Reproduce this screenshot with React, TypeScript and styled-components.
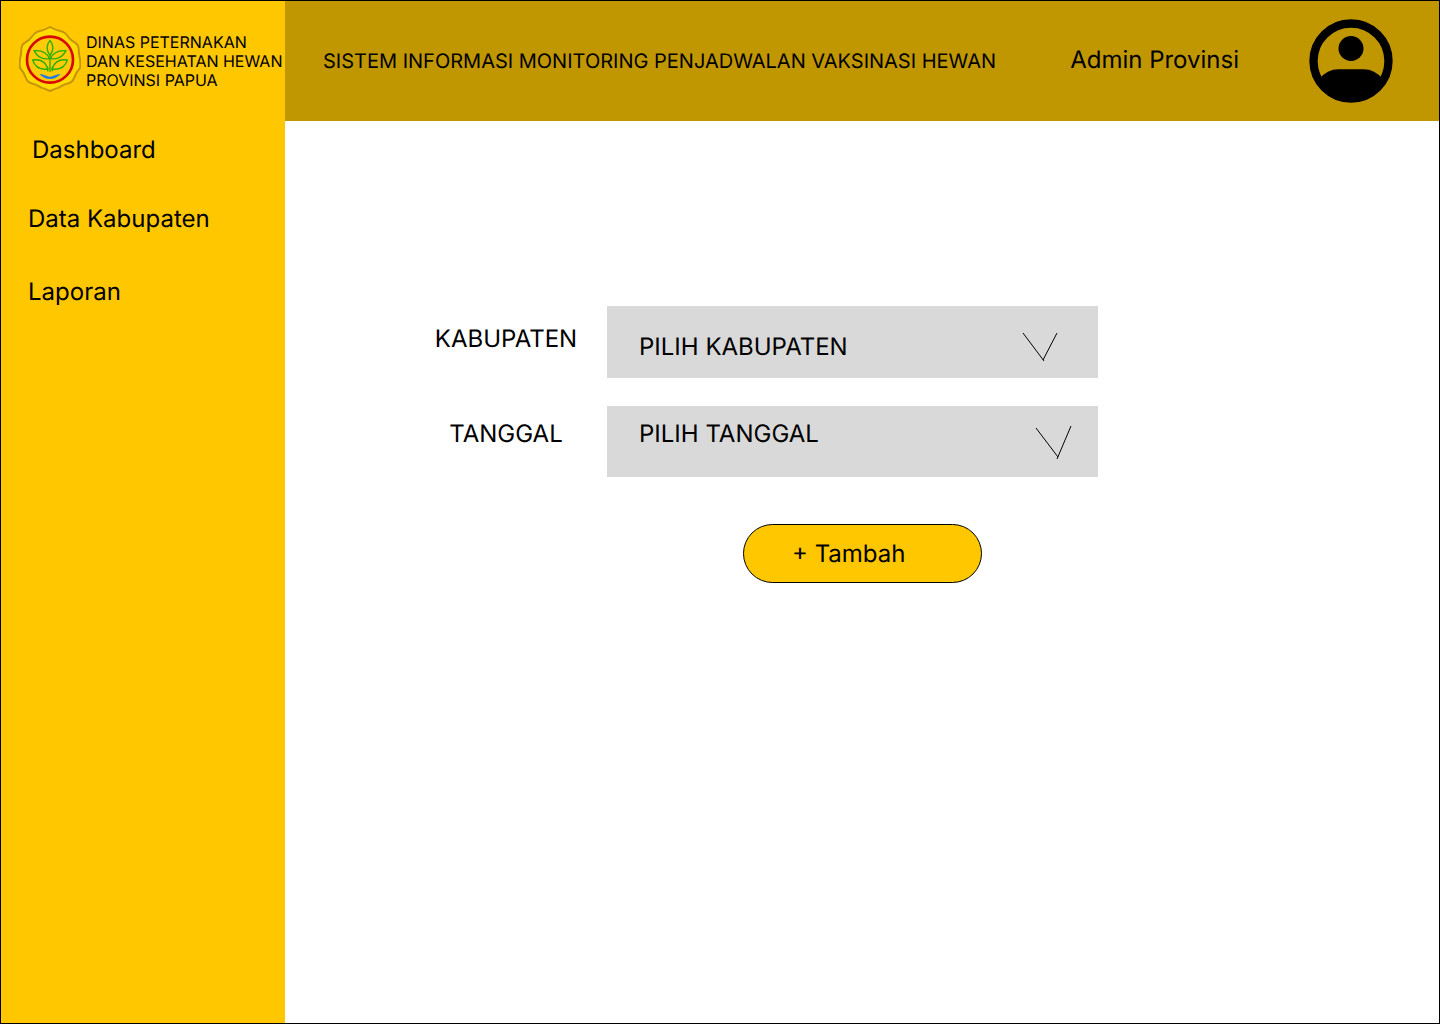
import React from "react";
import styled, { createGlobalStyle } from "styled-components";

const GlobalStyle = createGlobalStyle`
  *, *::before, *::after { box-sizing: border-box; }
  body {
    margin: 0;
    background: #ffffff;
    color: #000000;
    font-family: Inter, "Liberation Sans", sans-serif;
    font-size: 24px;
    font-weight: 400;
    line-height: 29px;
    text-rendering: geometricPrecision;
  }
`;

const Page = styled.div`
  display: grid;
  grid-template-columns: 284px minmax(0, 1fr);
  min-height: 100vh;
  border: 1px solid #000000;
`;

const Sidebar = styled.aside`
  background: #ffc700;
`;

const Brand = styled.div`
  display: flex;
  align-items: center;
  gap: 5px;
  height: 120px;
  padding: 0 0 4px 18px;
`;

const BrandName = styled.p`
  margin: 0;
  padding-top: 4px;
  font-size: 16px;
  line-height: 19px;
  white-space: nowrap;
`;

const Nav = styled.nav`
  display: flex;
  flex-direction: column;
  gap: 40px;
  padding: 14px 27px;
`;

const NavGroup = styled.div<{ $inset?: number }>`
  display: flex;
  flex-direction: column;
  align-items: flex-start;
  gap: 44px;
  padding-left: ${({ $inset = 0 }) => $inset}px;
`;

const NavLink = styled.a`
  color: inherit;
  text-decoration: none;
`;

const Content = styled.div`
  display: flex;
  flex-direction: column;
`;

const Header = styled.header`
  display: flex;
  align-items: center;
  height: 120px;
  padding: 0 38px;
  background: #c09700;
`;

const Title = styled.h1`
  flex: 1;
  margin: 0;
  font-size: 20px;
  font-weight: 400;
  line-height: 24px;
`;

const Account = styled.div`
  display: flex;
  align-items: center;
  gap: 62px;
`;

const AccountName = styled.span`
  padding-bottom: 4px;
  white-space: nowrap;
`;

const Avatar = styled.svg`
  display: block;
  width: 100px;
  height: 100px;
`;

const Form = styled.form`
  display: grid;
  grid-template-columns: 144px minmax(0, 491px);
  column-gap: 29px;
  row-gap: 28px;
  padding: 185px 149px 40px;
`;

const Label = styled.label<{ $top: number }>`
  padding-top: ${({ $top }) => $top}px;
  text-align: center;
`;

const SelectBox = styled.div`
  display: grid;
  background: #d9d9d9;

  > * {
    grid-area: 1 / 1;
  }
`;

const Select = styled.select<{ $top: number; $bottom: number }>`
  appearance: none;
  width: 100%;
  margin: 0;
  padding: ${({ $top, $bottom }) => `${$top}px 80px ${$bottom}px 32px`};
  border: 0;
  border-radius: 0;
  background: transparent;
  color: inherit;
  font: inherit;
  text-rendering: inherit;
`;

const Chevron = styled.svg`
  justify-self: end;
  width: 80px;
  height: 70px;
  pointer-events: none;
`;

const Actions = styled.div`
  grid-column: 2;
  padding: 19px 0 0 136px;
`;

const AddButton = styled.button`
  width: 239px;
  padding: 14px 48px;
  border: 1px solid #000000;
  border-radius: 30px;
  background: #ffc700;
  color: inherit;
  font: inherit;
  text-align: left;
  text-rendering: inherit;
  white-space: nowrap;
`;

const Emblem = () => (
  <svg width="62" height="66" viewBox="57 48 186 198" fill="none" aria-hidden="true">
    <path
      d="M150 51 Q168 61 188 65 Q198 70 205 81 Q212 91 225 98 Q235 104 236 116 Q236 130 240 148 Q242 162 240 174 Q229 186 223 202 Q219 216 208 219 Q190 223 176 233 Q160 238 150 243 Q140 238 124 233 Q110 223 92 219 Q81 216 77 202 Q71 186 60 174 Q58 162 60 148 Q64 130 64 116 Q65 104 75 98 Q88 91 95 81 Q102 70 112 65 Q132 61 150 51Z"
      fill="#ffda00"
      stroke="#c6940c"
      strokeWidth="6"
    />
    <circle cx="150" cy="149" r="69" fill="#ffca08" stroke="#d60808" strokeWidth="8" />
    <g stroke="#22b000" strokeWidth="4" strokeLinejoin="round">
      <path d="M150 91 Q133 112 150 137 Q167 112 150 91Z" />
      <path d="M148 146 Q138 119 102 122 Q117 151 148 146Z" />
      <path d="M152 146 Q162 119 198 122 Q183 151 152 146Z" />
      <path d="M144 177 Q134 145 98 150 Q108 182 144 177Z" />
      <path d="M156 177 Q166 145 202 150 Q192 182 156 177Z" />
      <path d="M150 137V186M143 170V184M157 170V184" />
    </g>
    <path d="M118 191 Q132 194 141 198 Q150 202 159 198 Q168 194 182 191 Q170 206 150 207 Q130 206 118 191Z" fill="#1f7ae8" />
  </svg>
);

const fields = [
  {
    id: "kabupaten",
    label: "KABUPATEN",
    placeholder: "PILIH KABUPATEN",
    labelTop: 18,
    top: 26,
    bottom: 17,
    chevron: "M5 27L26 55M25 54L39 27",
  },
  {
    id: "tanggal",
    label: "TANGGAL",
    placeholder: "PILIH TANGGAL",
    labelTop: 13,
    top: 13,
    bottom: 29,
    chevron: "M18 22L40 51M39 53L53 20",
  },
];

export default function App() {
  return (
    <>
      <GlobalStyle />
      <Page>
        <Sidebar>
          <Brand>
            <Emblem />
            <BrandName>
              DINAS PETERNAKAN
              <br />
              DAN KESEHATAN HEWAN
              <br />
              PROVINSI PAPUA
            </BrandName>
          </Brand>
          <Nav>
            <NavGroup $inset={4}>
              <NavLink href="#dashboard">Dashboard</NavLink>
            </NavGroup>
            <NavGroup>
              <NavLink href="#data-kabupaten">Data Kabupaten</NavLink>
              <NavLink href="#laporan">Laporan</NavLink>
            </NavGroup>
          </Nav>
        </Sidebar>
        <Content>
          <Header>
            <Title>SISTEM INFORMASI MONITORING PENJADWALAN VAKSINASI HEWAN</Title>
            <Account>
              <AccountName>Admin Provinsi</AccountName>
              <Avatar viewBox="0 0 24 24" aria-hidden="true">
                <circle cx="12" cy="12" r="9" fill="none" stroke="#000" strokeWidth="2" />
                <circle cx="12" cy="9" r="3" />
                <path d="M4.5 16.3Q6.2 14 9 14H15Q17.8 14 19.5 16.3L18.5 19L12 21.5L5.5 19Z" />
              </Avatar>
            </Account>
          </Header>
          <main>
            <Form onSubmit={(event) => event.preventDefault()}>
              {fields.map((field) => (
                <React.Fragment key={field.id}>
                  <Label htmlFor={field.id} $top={field.labelTop}>
                    {field.label}
                  </Label>
                  <SelectBox>
                    <Select id={field.id} $top={field.top} $bottom={field.bottom}>
                      <option>{field.placeholder}</option>
                    </Select>
                    <Chevron viewBox="0 0 80 70" fill="none" stroke="#000" aria-hidden="true">
                      <path d={field.chevron} />
                    </Chevron>
                  </SelectBox>
                </React.Fragment>
              ))}
              <Actions>
                <AddButton type="submit">+ Tambah</AddButton>
              </Actions>
            </Form>
          </main>
        </Content>
      </Page>
    </>
  );
}
